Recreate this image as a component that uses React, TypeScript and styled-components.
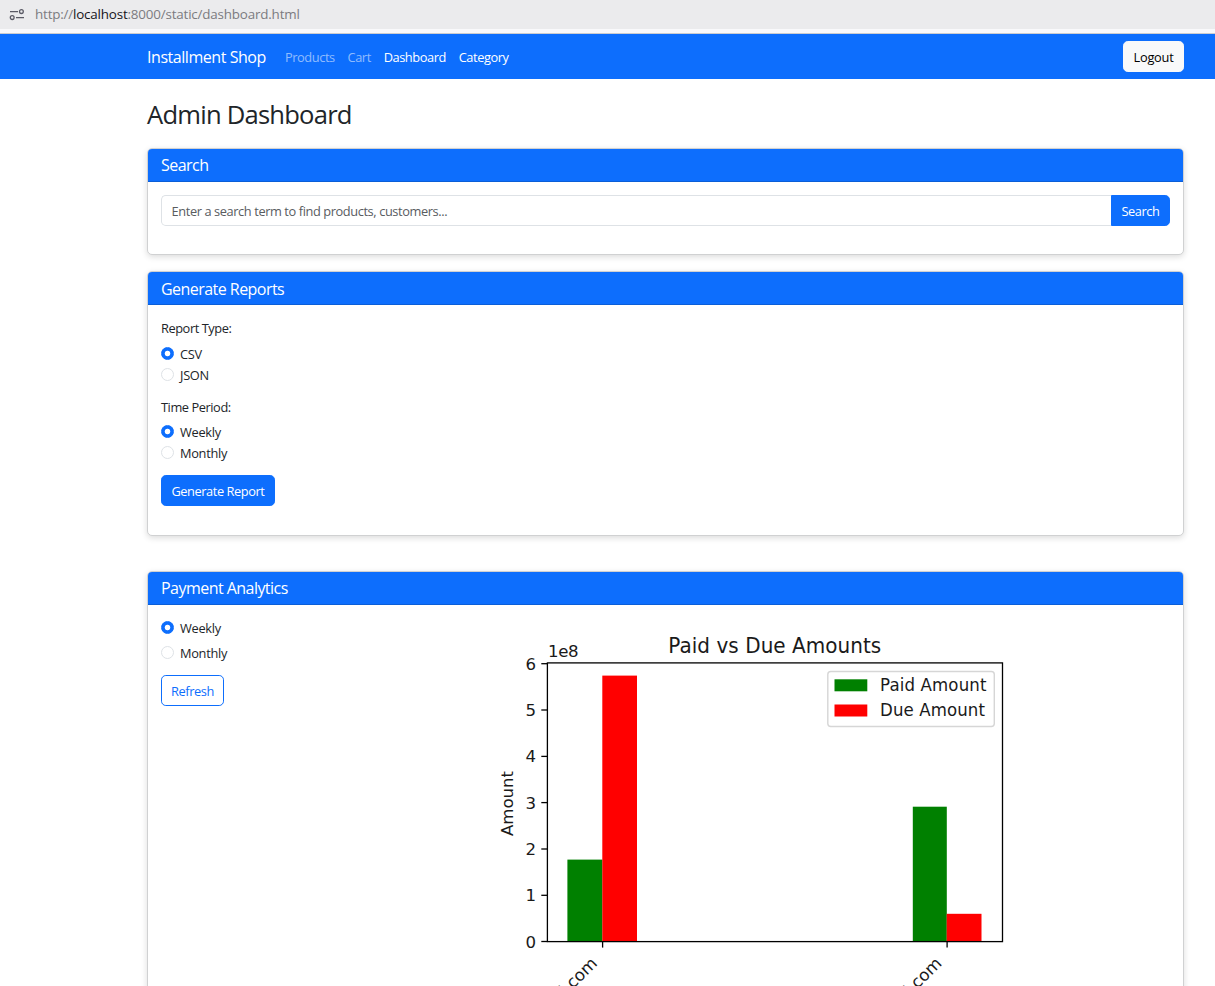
import React, { useState } from "react";
import styled, { createGlobalStyle } from "styled-components";

const GlobalStyle = createGlobalStyle`
  *, *::before, *::after { box-sizing: border-box; }
  body {
    margin: 0;
    background: #fff;
    color: #212529;
    font-family: "Segoe UI", "Open Sans", "Noto Sans", sans-serif;
    font-size: 12.8px;
    line-height: 19.2px;
    letter-spacing: -0.3px;
  }
`;

const Page = styled.div`
  height: 986px;
  overflow: hidden;
  display: flex;
  flex-direction: column;
`;

const AddressBar = styled.div`
  flex: none;
  display: flex;
  align-items: center;
  height: 34px;
  padding: 0 0 5px 9px;
  gap: 11px;
  background: linear-gradient(#ebebed 29px, #f9f9fb 29px, #f9f9fb 33px, #cccccf 33px);
  color: #7b7b80;
  font-size: 13.4px;
  letter-spacing: -0.18px;
  strong { font-weight: 400; color: #15141a; }
`;

const Navbar = styled.nav`
  flex: none;
  display: flex;
  align-items: center;
  height: 45px;
  padding: 0 31px 0 147px;
  background: #0d6efd;
`;

const Brand = styled.a`
  color: #fff;
  font-size: 16px;
  line-height: 24px;
  width: 138px;
  padding-top: 1px;
  letter-spacing: -0.45px;
  white-space: nowrap;
`;

const NavLinks = styled.div`
  display: flex;
  flex: 1;
  gap: 12.8px;
  padding-top: 2px;
  letter-spacing: -0.42px;
`;

const NavLink = styled.a<{ $active?: boolean }>`
  color: ${(p) => (p.$active ? "#fff" : "rgba(255, 255, 255, 0.55)")};
`;

const Button = styled.button<{ $kind?: "primary" | "light" | "outline"; $width: number }>`
  flex: none;
  width: ${(p) => p.$width}px;
  height: 31px;
  padding: 2px 0 0;
  border-radius: 4.8px;
  font: inherit;
  letter-spacing: ${(p) => (p.$kind === "light" ? "-0.25px" : "-0.42px")};
  white-space: nowrap;
  border: 1px solid ${(p) => (p.$kind === "light" ? "#f8f9fa" : "#0d6efd")};
  background: ${(p) => (p.$kind === "light" ? "#f8f9fa" : p.$kind === "outline" ? "#fff" : "#0d6efd")};
  color: ${(p) => (p.$kind === "light" ? "#000" : p.$kind === "outline" ? "#0d6efd" : "#fff")};
`;

const Main = styled.main`
  flex: none;
  width: 1037px;
  margin-left: 147px;
  padding-top: 20px;
`;

const Title = styled.h2`
  margin: 0 0 17px;
  height: 32px;
  font-size: 25.6px;
  line-height: 32px;
  font-weight: 400;
  letter-spacing: -0.78px;
`;

const Card = styled.section<{ $height: number; $gap: number }>`
  height: ${(p) => p.$height}px;
  margin-bottom: ${(p) => p.$gap}px;
  border: 1px solid #d0d1d2;
  border-radius: 5px;
  background: #fff;
  box-shadow: 0 2px 6px rgba(0, 0, 0, 0.14);
`;

const CardHeader = styled.h5<{ $line?: number }>`
  margin: 0;
  height: 33px;
  padding: 1px 13px 0;
  border-bottom: 1px solid #0b5ed7;
  border-radius: 4px 4px 0 0;
  background: #0d6efd;
  color: #fff;
  font-size: 16px;
  font-weight: 400;
  line-height: ${(p) => p.$line ?? 32}px;
  letter-spacing: -0.54px;
`;

const CardBody = styled.div`
  padding: 13px;
`;

const InputGroup = styled.div`
  display: flex;
  ${Button} { border-radius: 0 4.8px 4.8px 0; }
`;

const SearchInput = styled.input`
  flex: 1;
  min-width: 0;
  height: 31px;
  padding: 1px 9.6px 0;
  border: 1px solid #dee2e6;
  border-right: 0;
  border-radius: 4.8px 0 0 4.8px;
  font: inherit;
  letter-spacing: -0.4px;
  &::placeholder { color: #595c5f; opacity: 1; }
`;

const GroupLabel = styled.div`
  height: 20px;
  padding-top: 1px;
  letter-spacing: -0.43px;
`;

const Options = styled.div<{ $gap: number; $top: number; $bottom: number }>`
  display: flex;
  flex-direction: column;
  gap: ${(p) => p.$gap}px;
  margin: ${(p) => p.$top}px 0 ${(p) => p.$bottom}px;
`;

const Option = styled.label`
  display: flex;
  gap: 6px;
  height: 13px;
  line-height: 15px;
`;

const Radio = styled.input.attrs({ type: "radio" })`
  appearance: none;
  flex: none;
  width: 13px;
  height: 13px;
  margin: 0;
  border: 1px solid #dee2e6;
  border-radius: 50%;
  background: #fff;
  &:checked {
    border-color: #0d6efd;
    background: radial-gradient(circle, #fff 2.4px, #0d6efd 3.2px);
  }
`;

const AnalyticsBody = styled.div`
  display: flex;
  padding: 16px 13px 0;
`;

const Controls = styled.div`
  width: 329px;
`;

const Chart = styled.svg`
  flex: none;
  display: block;
  letter-spacing: 0;
  font-family: "DejaVu Sans", sans-serif;
`;

interface RadioListProps {
  name: string;
  options: string[];
  gap: number;
  top: number;
  bottom: number;
}

function RadioList({ name, options, gap, top, bottom }: RadioListProps) {
  const [value, setValue] = useState(options[0]);
  return (
    <Options $gap={gap} $top={top} $bottom={bottom}>
      {options.map((o) => (
        <Option key={o}>
          <Radio name={name} checked={value === o} onChange={() => setValue(o)} />
          {o}
        </Option>
      ))}
    </Options>
  );
}

const TICKS = [941.5, 895.3, 849, 802.6, 756.4, 710, 663.7];

function PaymentChart() {
  return (
    <Chart width="520" height="480" viewBox="490 621 520 480" fill="#1a1a1a">
      <text transform="translate(668.3 652.6) scale(1 1.08)" fontSize="20" textLength="213">Paid vs Due Amounts</text>
      <text x="548" y="657.2" fontSize="16.6" textLength="30.5">1e8</text>
      <text transform="translate(513.3 836) rotate(-90)" fontSize="16.6" textLength="65">Amount</text>
      <rect x="567.4" y="859.6" width="35" height="82" fill="#008000" />
      <rect x="602.3" y="675.6" width="34.7" height="266" fill="#f00" />
      <rect x="912.8" y="806.7" width="34" height="135" fill="#008000" />
      <rect x="946.7" y="913.8" width="34.8" height="28" fill="#f00" />
      <rect x="547.4" y="662.9" width="455.1" height="278.7" fill="none" stroke="#000" strokeWidth="1.3" />
      {TICKS.map((y, i) => (
        <g key={y}>
          <path d={`M541.3 ${y}H547.4`} stroke="#000" strokeWidth="1.3" />
          <text x="536" y={y + 6} fontSize="16.6" textAnchor="end">{i}</text>
        </g>
      ))}
      {[602.6, 947.1].map((x) => (
        <g key={x}>
          <path d={`M${x} 941.6V947.6`} stroke="#000" strokeWidth="1.3" />
          <text transform={`translate(${x - 4.5} 964.3) rotate(-45)`} fontSize="16.6" textAnchor="end">gmail.com</text>
        </g>
      ))}
      <rect x="827.8" y="671.5" width="166.5" height="55" rx="3" fill="#fff" stroke="#d6d6d6" strokeWidth="1.4" />
      <rect x="834.5" y="679.3" width="32.8" height="12" fill="#008000" />
      <rect x="834.5" y="704.5" width="32.8" height="12" fill="#f00" />
      <text transform="translate(880 691.4) scale(1 1.03)" fontSize="16.6" textLength="106.5">Paid Amount</text>
      <text transform="translate(880 716.4) scale(1 1.03)" fontSize="16.6" textLength="105">Due Amount</text>
    </Chart>
  );
}

export default function App() {
  return (
    <Page>
      <GlobalStyle />
      <AddressBar>
        <svg width="15" height="12" viewBox="0 0 15 12" fill="none" stroke="#5b5b66" strokeWidth="1.3">
          <path d="M1 2.6H9M7 8.6H15" />
          <circle cx="12.4" cy="2.6" r="1.9" />
          <circle cx="3.2" cy="8.6" r="1.9" />
        </svg>
        <span>http://<strong>localhost</strong>:8000/static/dashboard.html</span>
      </AddressBar>
      <Navbar>
        <Brand>Installment Shop</Brand>
        <NavLinks>
          <NavLink>Products</NavLink>
          <NavLink>Cart</NavLink>
          <NavLink $active>Dashboard</NavLink>
          <NavLink $active>Category</NavLink>
        </NavLinks>
        <Button $kind="light" $width={61}>Logout</Button>
      </Navbar>
      <Main>
        <Title>Admin Dashboard</Title>
        <Card $height={107} $gap={16}>
          <CardHeader $line={31}>Search</CardHeader>
          <CardBody>
            <InputGroup>
              <SearchInput placeholder="Enter a search term to find products, customers..." />
              <Button $width={59}>Search</Button>
            </InputGroup>
          </CardBody>
        </Card>
        <Card $height={265} $gap={35}>
          <CardHeader>Generate Reports</CardHeader>
          <CardBody>
            <GroupLabel>Report Type:</GroupLabel>
            <RadioList name="type" options={["CSV", "JSON"]} gap={8} top={9} bottom={16} />
            <GroupLabel>Time Period:</GroupLabel>
            <RadioList name="period" options={["Weekly", "Monthly"]} gap={8} top={8} bottom={16} />
            <Button $width={114}>Generate Report</Button>
          </CardBody>
        </Card>
        <Card $height={520} $gap={0}>
          <CardHeader $line={31}>Payment Analytics</CardHeader>
          <AnalyticsBody>
            <Controls>
              <RadioList name="analytics" options={["Weekly", "Monthly"]} gap={12} top={0} bottom={16} />
              <Button $kind="outline" $width={63}>Refresh</Button>
            </Controls>
            <PaymentChart />
          </AnalyticsBody>
        </Card>
      </Main>
    </Page>
  );
}
